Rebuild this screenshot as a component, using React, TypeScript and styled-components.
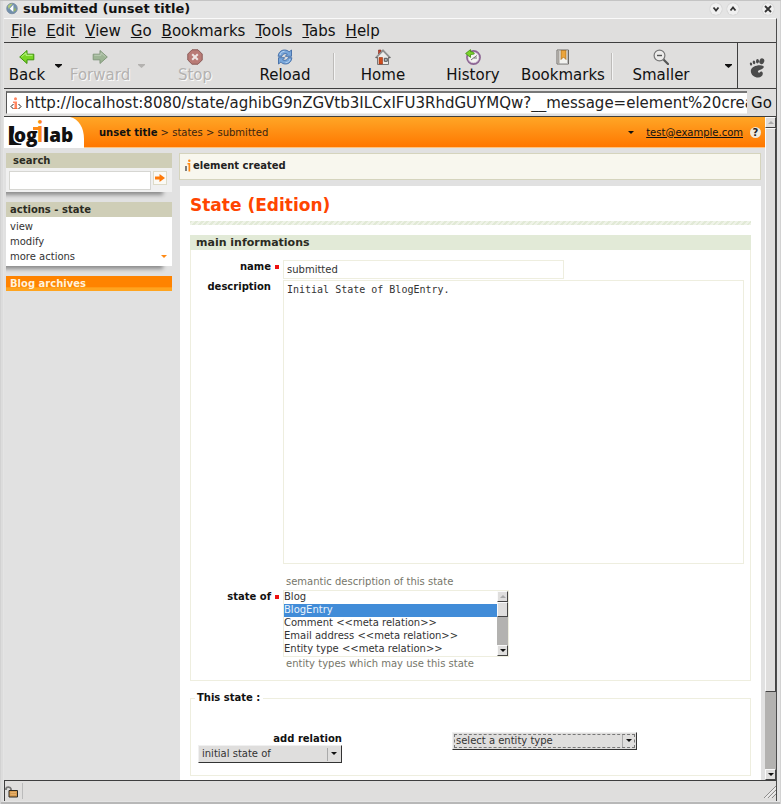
import React, { useState } from "react";
import styled, { createGlobalStyle } from "styled-components";

const GlobalStyle = createGlobalStyle`
  * { box-sizing: border-box; }
  body { margin: 0; background: #dfdedd; }
  body, button, input, select { font-family: "DejaVu Sans", Verdana, sans-serif; }
  button { margin: 0; padding: 0; border: 0; background: none; color: inherit; font-size: inherit; }
  a { color: inherit; text-decoration: none; }
  svg { display: block; }
`;

/* ---------- window ---------- */

const Window = styled.div`
  min-height: 100vh;
  display: flex;
  flex-direction: column;
  padding: 0 4px 3px;
  background: #e4e4e4;
  border-top: 1px solid #c4c4c4;
  box-shadow: inset 1px 0 #d2d2d2, inset -1px 0 #d2d2d2, inset 0 -2px #b8b8b8, inset 3px 0 #dcdcdc;
  color: #111;
`;

const TitleBar = styled.header`
  display: flex;
  align-items: center;
  height: 17px;
  padding: 0 3px 2px 2px;
  gap: 5px;
  font-size: 13px;
  font-weight: bold;
`;

const Title = styled.span`
  flex: 1;
`;

const WindowControl = styled.button<{ $apart?: boolean }>`
  width: 12px;
  height: 12px;
  margin-left: ${(p) => (p.$apart ? "18px" : "0")};
  border-radius: 50%;
  background: #f0f0f0;
  box-shadow: 0 0 1px 0 #aaaaaa;
`;

const Client = styled.div`
  flex: 1;
  display: flex;
  flex-direction: column;
  background: #dfdedd;
  border-top: 1px solid #fafafa;
  border-right: 1px solid #4c4c4c;
`;

const MenuBar = styled.nav`
  display: flex;
  align-items: center;
  height: 24px;
  padding: 0 7px;
  gap: 10px;
  border-bottom: 1px solid #3e3e3e;
  font-size: 15px;
`;

const MenuItem = styled.button`
  line-height: 20px;
`;

const ToolBar = styled.div`
  display: flex;
  align-items: stretch;
  height: 46px;
  border-bottom: 1px solid #3e3e3e;
  font-size: 15px;
`;

const ToolButton = styled.button<{ $width?: number }>`
  width: ${(p) => p.$width ?? 90}px;
  display: flex;
  flex-direction: column;
  align-items: center;
  padding-top: 6px;
  line-height: 20px;
  color: #111;

  &:disabled {
    color: #b4b2b0;
    text-shadow: 1px 1px #fafafa;
  }
`;

const DropButton = styled.button`
  width: 17px;
  display: flex;
  justify-content: center;
  align-items: center;
  color: #111;

  &:disabled { color: #b4b2b0; }
`;

const Divider = styled.span`
  width: 2px;
  margin: 10px 3px 8px;
  border-left: 1px solid #bdbbb9;
  border-right: 1px solid #f4f4f4;
`;

const Throbber = styled.div`
  width: 39px;
  display: flex;
  align-items: center;
  justify-content: center;
  padding-top: 4px;
  border-left: 1px solid #3e3e3e;
`;

const Spacer = styled.span`
  flex: 1;
`;

const LocationBar = styled.form`
  display: flex;
  height: 28px;
  padding: 2px 0 2px 2px;
  border-bottom: 1px solid #3e3e3e;
  font-size: 15px;
`;

const AddressBox = styled.label`
  flex: 1;
  min-width: 0;
  display: flex;
  align-items: center;
  padding-left: 3px;
  gap: 3px;
  background: #fff;
  border-top: 2px solid #777;
  border-left: 1px solid #555;
  border-bottom: 1px solid #eee;
`;

const Address = styled.input`
  flex: 1;
  min-width: 0;
  padding: 0;
  border: 0;
  outline: 0;
  background: none;
  color: #222;
  font-size: 15px;
`;

const GoButton = styled.button`
  width: 29px;
`;

/* ---------- document ---------- */

const Viewport = styled.div`
  flex: 1;
  display: flex;
`;

const Document = styled.div`
  flex: 1;
  min-width: 0;
  display: flex;
  flex-direction: column;
  background: #e1e1e1;
  font-size: 10px;
  line-height: 15px;
`;

const Banner = styled.header`
  display: flex;
  align-items: center;
  height: 31px;
  padding-right: 4px;
  background: linear-gradient(#ffa626, #ff7700);
  border-bottom: 1px solid #ffc27d;
`;

const Logo = styled.a`
  align-self: stretch;
  width: 95px;
`;

const Crumbs = styled.nav`
  flex: 1;
  color: #3a2410;

  a:first-child { color: #111; font-weight: bold; }
`;

const UserLink = styled.a`
  margin: 0 7px 0 12px;
  text-decoration: underline;
`;

const HelpLink = styled.a`
  width: 11px;
  height: 11px;
  border-radius: 50%;
  background: #eeeade;
  color: #222;
  font-weight: bold;
  line-height: 11px;
  text-align: center;
`;

const Columns = styled.div`
  flex: 1;
  display: grid;
  grid-template-columns: 166px minmax(0, 1fr);
  column-gap: 7px;
  padding: 5px 4px 0 2px;
`;

const Side = styled.aside`
  display: flex;
  flex-direction: column;
  gap: 10px;
`;

const SideBox = styled.section`
  background: #fff;
  box-shadow: -7px 5px 4px -2px #8c8c8c;
  clip-path: inset(0 0 -10px 0);
`;

const SideTitle = styled.h2<{ $indent?: boolean }>`
  margin: 0;
  padding-left: ${(p) => (p.$indent ? "7px" : "4px")};
  background: #cfceb7;
  color: #2b2b22;
  font-size: 10px;
  line-height: 15px;
`;

const SearchForm = styled.form`
  display: flex;
  align-items: center;
  gap: 2px;
  height: 24px;
  padding: 0 5px 0 3px;
  background: #f0f0f0;
`;

const SearchInput = styled.input`
  flex: 1;
  min-width: 0;
  height: 19px;
  border: 1px solid #d6d6d2;
  background: #fff;
  font-size: 10px;
`;

const SearchButton = styled.button`
  width: 14px;
  height: 14px;
  display: grid;
  place-items: center;
  margin-bottom: 4px;
  border: 1px solid #dedbc8;
  background: #fbfaf5;
`;

const ActionList = styled.ul`
  margin: 0;
  padding: 2px 5px 2px 4px;
  list-style: none;
  color: #333;
`;

const ActionItem = styled.li`
  display: flex;
  justify-content: space-between;
  align-items: center;
  line-height: 15px;
`;

const ArchiveLink = styled.a`
  padding-left: 4px;
  background: linear-gradient(#ff8300 70%, #ffa41f 80%);
  color: #fff3dd;
  font-weight: bold;
  line-height: 15px;
`;

const Main = styled.main`
  display: flex;
  flex-direction: column;
  gap: 6px;
`;

const Message = styled.p`
  display: flex;
  align-items: center;
  gap: 2px;
  margin: 0;
  height: 27px;
  padding: 0 0 2px 5px;
  border: 1px solid #d5d4bd;
  background: #f8f7ee;
  color: #222;
  font-weight: bold;
`;

const Panel = styled.section`
  flex: 1;
  margin-left: 1px;
  padding: 8px 10px 3px;
  background: #fff;
`;

const Heading = styled.h1`
  margin: 0 0 5px;
  color: #ff4500;
  font-size: 17px;
  line-height: 22px;
`;

const Hatch = styled.div`
  height: 4px;
  background: repeating-linear-gradient(135deg, #e2ead7 0 2px, #eff3e8 2px 4px);
`;

const FormBox = styled.section`
  margin-top: 10px;
  padding-bottom: 8px;
  border: 1px solid #eeeedf;
  border-top: 0;
`;

const FormTitle = styled.h2`
  margin: 0 -1px 10px;
  padding-left: 6px;
  background: #e2ead7;
  color: #2b2b22;
  font-size: 11px;
  line-height: 15px;
`;

const Row = styled.div`
  display: grid;
  grid-template-columns: 92px minmax(0, 1fr);
  padding-right: 6px;
  margin-bottom: 1px;
`;

const FieldLabel = styled.label<{ $required?: boolean }>`
  display: flex;
  justify-content: flex-end;
  align-items: center;
  align-self: start;
  font-weight: bold;
  line-height: 14px;

  &::after {
    content: "";
    width: 4px;
    height: 4px;
    margin: 0 4px;
    background: ${(p) => (p.$required ? "#ee1111" : "transparent")};
  }
`;

const TextInput = styled.input`
  width: 61%;
  height: 19px;
  padding: 0 3px;
  border: 1px solid #eeeedf;
  color: #333;
  font-size: 10px;
`;

const TextArea = styled.textarea`
  display: block;
  width: 100%;
  padding: 2px 3px 0;
  border: 1px solid #eeeedf;
  resize: none;
  color: #333;
  font-family: "DejaVu Sans Mono", monospace;
  font-size: 10px;
  line-height: 14px;
`;

const Hint = styled.p<{ $spaced?: boolean }>`
  margin: ${(p) => (p.$spaced ? "11px" : "0")} 0 0 3px;
  color: #76766a;
  line-height: 14px;
`;

const ListBox = styled.div`
  display: flex;
  width: 226px;
  border: 1px solid #eeeedf;
`;

const List = styled.select`
  flex: 1;
  min-width: 0;
  height: 65px;
  padding: 0;
  border: 0;
  outline: 0;
  overflow: hidden;
  background: #fff;
  color: #333;
  font-size: 10px;

  option {
    min-height: 13px;
    height: 13px;
    padding: 0;
    line-height: 13px;
  }
  option:checked {
    background: #418cd8 linear-gradient(#418cd8, #418cd8);
    color: #fff;
    -webkit-text-fill-color: #eaf3fc;
  }
`;

const Track = styled.div`
  width: 11px;
  display: flex;
  flex-direction: column;
  flex-shrink: 0;
  background: #b3b2b0;
`;

const TrackButton = styled.button`
  width: 100%;
  height: 11px;
  display: grid;
  place-items: center;
  border: 1px solid;
  border-color: #fafafa #444 #444 #fafafa;
  background: #dfdedd;

  &:disabled { color: #aaa; }
`;

const Thumb = styled.span<{ $share: number }>`
  flex: ${(p) => p.$share};
  border: 1px solid;
  border-color: #fafafa #444 #444 #fafafa;
  background: #dfdedd;
`;

const Trough = styled.span<{ $share: number }>`
  flex: ${(p) => p.$share};
`;

const Relations = styled.fieldset`
  display: flex;
  align-items: flex-start;
  gap: 110px;
  margin: 10px 0 0;
  padding: 27px 7px 12px;
  border: 1px solid #eeeedf;

  legend {
    padding: 0 3px 0 2px;
    margin-left: -3px;
    font-weight: bold;
    line-height: 14px;
  }
`;

const RelationField = styled.div<{ $width: number }>`
  width: ${(p) => p.$width}px;

  label {
    display: block;
    font-weight: bold;
    line-height: 13px;
    text-align: right;
  }
`;

const DropFrame = styled.div`
  position: relative;

  svg {
    position: absolute;
    right: 5px;
    top: 7px;
    pointer-events: none;
  }
`;

const DropSelect = styled.select<{ $focused?: boolean }>`
  appearance: none;
  display: block;
  width: 100%;
  height: 18px;
  padding: 0 18px 1px 3px;
  border: 1px solid;
  border-color: #f0f0f0 #333 #333 #f0f0f0;
  border-radius: 0;
  background: linear-gradient(#aaa, #aaa) right 13px center / 1px 13px no-repeat #dfdedd;
  color: #333;
  font-size: 10px;
  outline: ${(p) => (p.$focused ? "1px dashed #777" : "none")};
  outline-offset: -3px;
`;

const StatusBar = styled.footer`
  display: flex;
  align-items: center;
  justify-content: space-between;
  height: 21px;
  border-top: 1px solid #3e3e3e;
  border-left: 1px solid #3e3e3e;
`;

const LockCell = styled.span`
  height: 16px;
  padding-right: 3px;
  border-right: 1px solid #bbb;
`;

/* ---------- drawings ---------- */

const Caret = ({ fill = "currentColor", up = false }: { fill?: string; up?: boolean }) => (
  <svg width="6" height="3" viewBox="0 0 6 3">
    <path d={up ? "M0 3 3 0 6 3z" : "M0 0 3 3 6 0z"} fill={fill} />
  </svg>
);

const WideCaret = () => (
  <svg width="7" height="4" viewBox="0 0 7 4">
    <path d="M0 0h7v1L3.500 4 0 1z" fill="currentColor" />
  </svg>
);

const Arrow = ({ back = false }: { back?: boolean }) => (
  <svg width="16" height="16" viewBox="0 0 16 16" opacity={back ? 1 : 0.7}>
    <path
      d={back ? "M.7 8 8 1.500v3.700h6.800v5.600H8v3.700z" : "M15.300 8 8 1.500v3.700H1.200v5.600H8v3.700z"}
      fill={back ? "#78d625" : "#83a577"}
      stroke={back ? "#3c9208" : "#5d7b55"}
    />
    <path d={back ? "M2.500 7.700 7 3.800v2.500h6.500" : "M2.300 6.300H9V3.800l4.500 3.900"} fill="none" stroke={back ? "#bdf58a" : "#aec5a6"} />
  </svg>
);

const StopIcon = () => (
  <svg width="16" height="16" viewBox="0 0 16 16">
    <path d="M5 .8h6L15.200 5v6L11 15.200H5L.8 11V5z" fill="#b97b76" stroke="#8b5b58" />
    <path d="m5.200 5.200 5.600 5.600m0-5.600-5.600 5.600" stroke="#eee6e4" strokeWidth="2" />
  </svg>
);

const ReloadIcon = () => (
  <svg width="16" height="16" viewBox="0 0 16 16">
    <path
      d="M1.200 7.300C1.400 3.500 4 1 7.500 1c2 0 3.500.7 4.600 1.900L14.500 1v6.300H8.300l2-2.200C9.600 4.700 8.700 4.600 7.900 4.700 6.300 4.800 5.300 5.800 5 7.300z"
      fill="#78a6da"
      stroke="#3f6ba6"
      strokeWidth=".9"
    />
    <path
      d="M14.800 8.700c-.2 3.800-2.800 6.300-6.300 6.300-2 0-3.500-.7-4.600-1.900L1.500 15V8.700h6.200l-2 2.200c.7.400 1.600.5 2.400.4 1.600-.1 2.600-1.100 2.900-2.600z"
      fill="#78a6da"
      stroke="#3f6ba6"
      strokeWidth=".9"
    />
    <path d="M3 6c.5-2.200 2-3.500 4.500-3.600M13 10c-.5 2.200-2 3.500-4.500 3.600" fill="none" stroke="#b8d3f1" />
  </svg>
);

const HomeIcon = () => (
  <svg width="16" height="16" viewBox="0 0 16 16">
    <path d="M3.500 1H6v4H3.500z" fill="#c4452f" stroke="#7f2b1d" strokeWidth=".6" />
    <path d="M2.500 7.500 8 2l5.500 5.500v8h-11z" fill="#ececea" stroke="#777" />
    <path d="M.7 9 8 1.500 15.300 9" fill="none" stroke="#666" strokeWidth="1.700" />
    <path d="M1.500 8 8 1.500 14.500 8" fill="none" stroke="#eee" strokeWidth=".6" />
    <path d="M4 8.500h3.500V15H4z" fill="#d04c1c" stroke="#9a3210" strokeWidth=".6" />
    <path d="M9.300 9.300h3v3h-3z" fill="#aeb8c0" stroke="#555" />
  </svg>
);

const HistoryIcon = () => (
  <svg width="16" height="16" viewBox="0 0 16 16">
    <circle cx="8.500" cy="8.500" r="6.500" fill="#f4f4f1" stroke="#8d6694" strokeWidth="1.800" />
    <circle cx="8.500" cy="8.500" r="5.300" fill="none" stroke="#cfb9d3" strokeWidth=".6" />
    <path d="M12 6.500 8.500 9H12M6 11l2.500-2" fill="none" stroke="#666" strokeWidth=".9" />
    <path d="M.6 4.500 5.500.6v2.100C8 2.500 9 3.600 9.300 5 8 5.300 6.800 5.300 5.500 5.600v2.800z" fill="#7bd32a" stroke="#3f8f10" strokeWidth=".8" />
  </svg>
);

const BookmarkIcon = () => (
  <svg width="16" height="16" viewBox="0 0 16 16">
    <path d="M2 1h11.500v14H2z" fill="#f2f2ef" stroke="#6c6a66" />
    <path d="M2.500 1.500h2v13h-2z" fill="#a8a49f" />
    <path d="M12.500 2v12.500H5" fill="none" stroke="#bbb" />
    <path d="M6 1.500h5v9L8.500 8 6 10.500z" fill="#eba53c" stroke="#a86c18" strokeWidth=".7" />
  </svg>
);

const ZoomOutIcon = () => (
  <svg width="16" height="16" viewBox="0 0 16 16">
    <path d="m10.500 10.500 4.500 4.500" stroke="#555" strokeWidth="2.200" strokeLinecap="round" />
    <circle cx="6.500" cy="6.500" r="5.400" fill="#ecebea" stroke="#777" strokeWidth="1.200" />
    <path d="M4 6.500h5" stroke="#555" strokeWidth="1.400" />
  </svg>
);

const FootIcon = () => (
  <svg width="16" height="20" viewBox="0 0 16 20">
    <g fill="#4b4b4b">
      <ellipse cx="12.800" cy="3.300" rx="2.400" ry="3" transform="rotate(20 12.800 3.300)" />
      <ellipse cx="8.500" cy="3.200" rx="1.500" ry="2.200" transform="rotate(5 8.500 3.200)" />
      <ellipse cx="5" cy="4.300" rx="1.300" ry="1.900" transform="rotate(-10 5 4.300)" />
      <ellipse cx="2" cy="6" rx="1.100" ry="1.600" transform="rotate(-20 2 6)" />
      <path d="M14.300 8C11 5.800 1.700 8 1.800 13c.2 4.200 3.700 6.500 7.200 6.500 3 0 5-1.700 4.800-4.300-.2-1.600-1.400-2-2.300-1.500-.8.500-1.100 1.200-1.900.9-1.200-.5-.7-2.200 1-2.700 2.300-.6 5.300-2 3.700-3.900z" />
    </g>
  </svg>
);

const GlobeIcon = () => (
  <svg width="12" height="13" viewBox="0 0 13 13">
    <circle cx="6.500" cy="6.500" r="5.700" fill="#7190ae" stroke="#7b8ea2" />
    <path d="M2 4c1-2 3-3 5-2.500L5 4 3 7z" fill="#b5cc7a" />
    <path d="M8 2.500v7.700L4 6.800z" fill="#fff" />
    <path d="M8 10.500 11 8 9.500 5z" fill="#93b562" />
  </svg>
);

const FavIcon = () => (
  <svg width="12" height="13" viewBox="0 0 12 13">
    <circle cx="5.500" cy="1.800" r="1.500" fill="#ff8560" />
    <path d="M3 4.500h4V11H4.500V6H3z" fill="#ff8560" />
    <path d="M3.500 7 1 9.500 3.500 12M8.500 7 11 9.500 8.500 12" fill="none" stroke="#222" />
    <path d="M3.500 11.500h4" stroke="#f07040" />
  </svg>
);

const InfoMark = () => (
  <svg width="6" height="13" viewBox="0 0 6 13">
    <path d="M1 7v5" stroke="#555" strokeWidth="1.500" />
    <path d="M2.500 4h2.700v8.500H3.500v-7h-1z" fill="#ff8a14" />
    <circle cx="4.300" cy="1.800" r="1.200" fill="#ff8a14" />
  </svg>
);

const LogoSvg = styled.svg`
  overflow: visible;
  font-family: "Open Sans", sans-serif;
  font-weight: 800;
`;

const LogoMark = () => (
  <LogoSvg width="81" height="31" viewBox="0 0 81 31">
    <path d="M0 0h66c9 2 14 11 14 22v9H0z" fill="#fff" />
    <text x="3" y="28" fill="#111">
      <tspan fontSize="26">L</tspan>
      <tspan x="10" y="25" fontSize="19" stroke="#fff" strokeWidth="3" paintOrder="stroke">og</tspan>
      <tspan x="32" y="25" fontSize="29" fontWeight="600" fill="#ff8a14">i</tspan>
      <tspan x="39" y="25" fontSize="19">lab</tspan>
    </text>
    <path d="M29 10h6v3h-6z" fill="#ff8a14" />
  </LogoSvg>
);

const LockIcon = () => (
  <svg width="14" height="16" viewBox="0 0 14 16">
    <path d="M1 7V5.500C1.500 3.500 5.500 3.500 6 6v3" fill="none" stroke="#777" strokeWidth="1.800" />
    <path d="M4 7.500h8.500V14H4z" fill="#d79b4f" stroke="#2e2a22" />
    <path d="M5.500 9.500H11M5.500 11.500H11" stroke="#e6b06c" />
  </svg>
);

const GripIcon = () => (
  <svg width="13" height="13" viewBox="0 0 13 13">
    <path d="M1 13 13 1M5 13l8-8M9 13l4-4" stroke="#8e8d8b" />
    <path d="M2 13.500 13.500 2M6 13.500 13.500 6" stroke="#fff" strokeWidth=".7" />
  </svg>
);

const ControlGlyph = ({ d }: { d: string }) => (
  <svg width="12" height="12" viewBox="0 0 12 12">
    <path d={d} fill="none" stroke="#333" strokeWidth="1.800" />
  </svg>
);

/* ---------- content ---------- */

const menus = ["File", "Edit", "View", "Go", "Bookmarks", "Tools", "Tabs", "Help"];

const entityTypes = [
  "Blog",
  "BlogEntry",
  "Comment <<meta relation>>",
  "Email address <<meta relation>>",
  "Entity type <<meta relation>>",
];

const ScrollTrack = ({ thumb, rest }: { thumb: number; rest: number }) => (
  <Track>
    <TrackButton type="button" disabled aria-label="Scroll up"><Caret up /></TrackButton>
    <Thumb $share={thumb} />
    <Trough $share={rest} />
    <TrackButton type="button" aria-label="Scroll down"><Caret /></TrackButton>
  </Track>
);

export default function App() {
  const [types, setTypes] = useState(["BlogEntry"]);

  return (
    <Window>
      <GlobalStyle />
      <TitleBar>
        <GlobeIcon />
        <Title>submitted (unset title)</Title>
        <WindowControl aria-label="Minimize"><ControlGlyph d="m3.500 4.500 2.500 3 2.500-3" /></WindowControl>
        <WindowControl aria-label="Maximize"><ControlGlyph d="m3.500 7.500 2.500-3 2.500 3" /></WindowControl>
        <WindowControl $apart aria-label="Close"><ControlGlyph d="m3 3 6 6m0-6-6 6" /></WindowControl>
      </TitleBar>
      <Client>
        <MenuBar>
          {menus.map((name) => (
            <MenuItem key={name}><u>{name[0]}</u>{name.slice(1)}</MenuItem>
          ))}
        </MenuBar>
        <ToolBar>
          <ToolButton $width={46}><Arrow back />Back</ToolButton>
          <DropButton aria-label="Back list"><WideCaret /></DropButton>
          <ToolButton $width={66} disabled><Arrow />Forward</ToolButton>
          <DropButton disabled aria-label="Forward list"><WideCaret /></DropButton>
          <ToolButton disabled><StopIcon />Stop</ToolButton>
          <ToolButton><ReloadIcon />Reload</ToolButton>
          <Divider />
          <ToolButton><HomeIcon />Home</ToolButton>
          <ToolButton><HistoryIcon />History</ToolButton>
          <ToolButton><BookmarkIcon />Bookmarks</ToolButton>
          <Divider />
          <ToolButton><ZoomOutIcon />Smaller</ToolButton>
          <Spacer />
          <DropButton aria-label="More tools"><WideCaret /></DropButton>
          <Throbber><FootIcon /></Throbber>
        </ToolBar>
        <LocationBar onSubmit={(e) => e.preventDefault()}>
          <AddressBox>
            <FavIcon />
            <Address
              aria-label="Address"
              defaultValue="http://localhost:8080/state/aghibG9nZGVtb3ILCxIFU3RhdGUYMQw?__message=element%20crea"
            />
          </AddressBox>
          <GoButton>Go</GoButton>
        </LocationBar>
        <Viewport>
          <Document>
            <Banner>
              <Logo href="#" aria-label="Logilab"><LogoMark /></Logo>
              <Crumbs>
                <a href="#">unset title</a> &gt; <a href="#">states</a> &gt; submitted
              </Crumbs>
              <Caret fill="#111" />
              <UserLink href="#">test@example.com</UserLink>
              <HelpLink href="#">?</HelpLink>
            </Banner>
            <Columns>
              <Side>
                <SideBox>
                  <SideTitle $indent>search</SideTitle>
                  <SearchForm onSubmit={(e) => e.preventDefault()}>
                    <SearchInput type="text" aria-label="search" />
                    <SearchButton aria-label="Run search">
                      <svg width="10" height="8" viewBox="0 0 10 8">
                        <path d="M0 2.500h4.500V0L10 4 4.500 8V5.500H0z" fill="#ff7a0a" />
                      </svg>
                    </SearchButton>
                  </SearchForm>
                </SideBox>
                <SideBox>
                  <SideTitle>actions - state</SideTitle>
                  <ActionList>
                    <ActionItem><a href="#">view</a></ActionItem>
                    <ActionItem><a href="#">modify</a></ActionItem>
                    <ActionItem><a href="#">more actions</a><Caret fill="#ff8a14" /></ActionItem>
                  </ActionList>
                </SideBox>
                <ArchiveLink href="#">Blog archives</ArchiveLink>
              </Side>
              <Main>
                <Message><InfoMark />element created</Message>
                <Panel>
                  <Heading>State (Edition)</Heading>
                  <Hatch />
                  <FormBox>
                    <FormTitle>main informations</FormTitle>
                    <Row>
                      <FieldLabel htmlFor="name" $required>name</FieldLabel>
                      <TextInput id="name" defaultValue="submitted" />
                    </Row>
                    <Row>
                      <FieldLabel htmlFor="description">description</FieldLabel>
                      <div>
                        <TextArea id="description" rows={20} spellCheck={false} defaultValue="Initial State of BlogEntry." />
                        <Hint $spaced>semantic description of this state</Hint>
                      </div>
                    </Row>
                    <Row>
                      <FieldLabel htmlFor="state-of" $required>state of</FieldLabel>
                      <div>
                        <ListBox>
                          <List
                            id="state-of"
                            multiple
                            size={5}
                            value={types}
                            onChange={(e) => setTypes(Array.from(e.target.selectedOptions, (o) => o.value))}
                          >
                            {entityTypes.map((name) => <option key={name}>{name}</option>)}
                          </List>
                          <ScrollTrack thumb={14} rest={29} />
                        </ListBox>
                        <Hint>entity types which may use this state</Hint>
                      </div>
                    </Row>
                  </FormBox>
                  <Relations>
                    <legend>This state :</legend>
                    <RelationField $width={144}>
                      <label htmlFor="relation">add relation</label>
                      <DropFrame>
                        <DropSelect id="relation"><option>initial state of</option></DropSelect>
                        <Caret fill="#111" />
                      </DropFrame>
                    </RelationField>
                    <RelationField $width={185}>
                      <DropFrame>
                        <DropSelect $focused aria-label="entity type"><option>select a entity type</option></DropSelect>
                        <Caret fill="#111" />
                      </DropFrame>
                    </RelationField>
                  </Relations>
                </Panel>
              </Main>
            </Columns>
          </Document>
          <ScrollTrack thumb={563} rest={77} />
        </Viewport>
        <StatusBar>
          <LockCell><LockIcon /></LockCell>
          <GripIcon />
        </StatusBar>
      </Client>
    </Window>
  );
}
